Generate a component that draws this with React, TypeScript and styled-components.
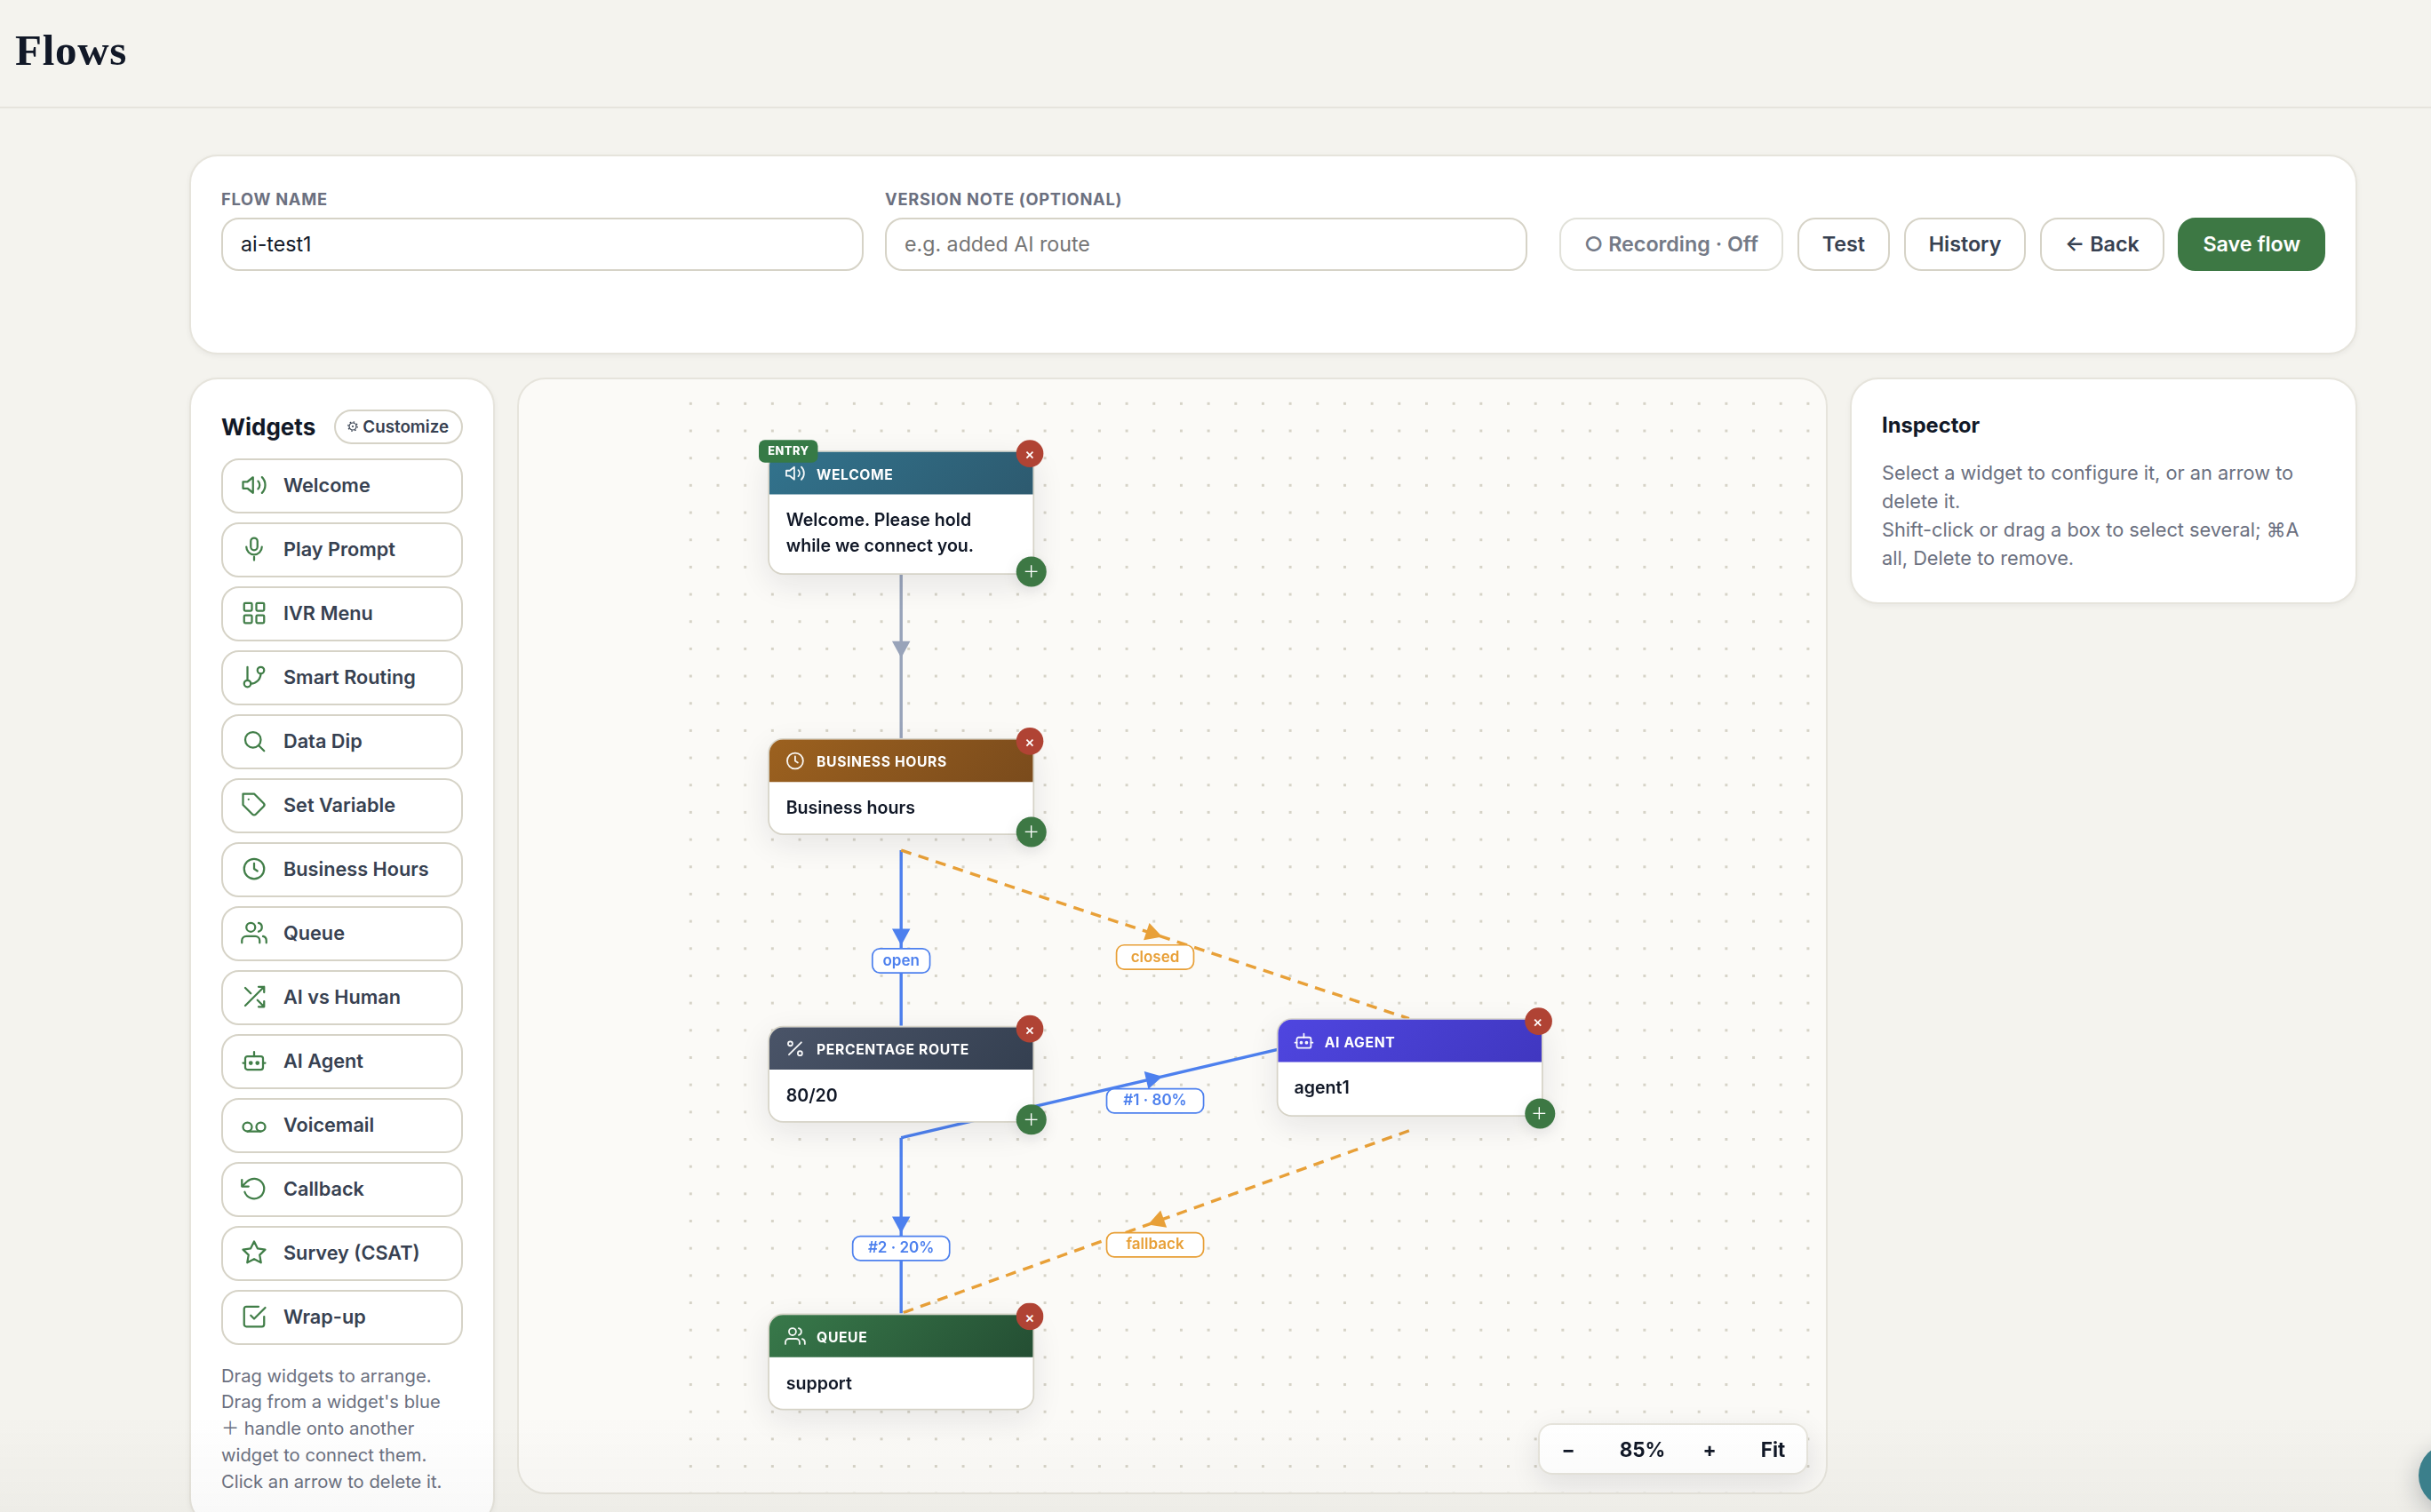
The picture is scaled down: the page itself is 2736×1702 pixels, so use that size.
import React from "react";
import styled, { createGlobalStyle } from "styled-components";

const FONT = `Inter, "Liberation Sans", "Noto Sans CJK SC", sans-serif`;

const Global = createGlobalStyle`
  *, *::before, *::after { box-sizing: border-box; }
  html, body { margin: 0; padding: 0; }
  body {
    background: #f4f3ee;
    font-family: ${FONT};
    color: #111827;
    overflow: hidden;
  }
  button, input { font-family: inherit; }
`;

const Page = styled.div`
  position: relative;
  width: 2736px;
  height: 1702px;
  overflow: hidden;
  background: #f4f3ee;
`;

const TopBar = styled.header`
  height: 122px;
  padding: 29px 17px 0;
  border-bottom: 2px solid #e6e4dd;
`;

const PageTitle = styled.h1`
  margin: 0;
  font-family: "Liberation Serif", serif;
  font-weight: 700;
  font-size: 49px;
  line-height: 56px;
  letter-spacing: 0.7px;
  color: #111827;
`;

const Main = styled.main`
  display: flex;
  flex-direction: column;
  gap: 26px;
  padding: 52px 83px 0 213px;
`;

const Card = styled.section`
  background: #fff;
  border: 2px solid #e6e4dc;
  border-radius: 32px;
  box-shadow: 0 2px 6px rgba(17, 24, 39, 0.05);
  padding: 33.5px 34px;
`;

const Toolbar = styled(Card)`
  height: 225px;
  display: flex;
  align-items: flex-start;
`;

const Fields = styled.div`
  flex: none;
  width: 1470px;
  display: grid;
  grid-template-columns: 1fr 1fr;
  gap: 24px;
  margin-right: 36px;
`;

const Field = styled.label`
  display: flex;
  flex-direction: column;
  gap: 7px;
`;

const FieldLabel = styled.span`
  font-size: 18.3px;
  font-weight: 700;
  line-height: 28px;
  letter-spacing: 0.73px;
  text-transform: uppercase;
  color: #6b7080;
`;

const TextInput = styled.input`
  width: 100%;
  height: 60px;
  padding: 0 20px;
  border: 2px solid #d6d3c7;
  border-radius: 20px;
  background: #fff;
  font-size: 23.2px;
  color: #111827;
  outline: none;
  &::placeholder { color: #757575; opacity: 1; }
`;

const Actions = styled.div`
  flex: 1;
  display: flex;
  justify-content: space-between;
  padding-top: 35px;
`;

const Button = styled.button<{ $kind?: "primary" | "muted" }>`
  height: 60px;
  padding: 0 26px;
  border-radius: 20px;
  font-size: 23.3px;
  font-weight: 600;
  white-space: nowrap;
  border: 2px solid
    ${(p) => (p.$kind === "primary" ? "#3d7844" : p.$kind === "muted" ? "#e1e1d9" : "#d6d3c7")};
  background: ${(p) => (p.$kind === "primary" ? "#3d7844" : "#fff")};
  color: ${(p) => (p.$kind === "primary" ? "#fff" : p.$kind === "muted" ? "#747a87" : "#374151")};
`;

const Workspace = styled.div`
  display: grid;
  grid-template-columns: 343.6px 1fr 571px;
  gap: 25px;
  align-items: start;
`;

const PanelHead = styled.div`
  display: flex;
  align-items: center;
  justify-content: space-between;
  height: 39px;
  margin-bottom: 16px;
`;

const PanelTitle = styled.h2`
  margin: 0;
  font-size: 26px;
  font-weight: 700;
  color: #111827;
`;

const CustomizeButton = styled.button`
  height: 39px;
  padding: 0 13.5px;
  border: 2px solid #d6d3c7;
  border-radius: 20px;
  background: #fff;
  font-size: 18.8px;
  font-weight: 600;
  color: #374151;
  display: flex;
  align-items: center;
  gap: 5px;
`;

const Gear = styled.svg`
  width: 12px;
  height: 12px;
  display: block;
`;

const WidgetList = styled.div`
  display: flex;
  flex-direction: column;
  gap: 10px;
`;

const WidgetButton = styled.button`
  height: 62px;
  display: flex;
  align-items: center;
  gap: 18px;
  padding: 0 20px 1px;
  border: 2px solid #d6d3c7;
  border-radius: 20px;
  background: #fff;
  font-size: 21.7px;
  font-weight: 600;
  color: #374151;
  text-align: left;
`;

const Glyph = styled.svg<{ $size: number; $color: string; $weight: number }>`
  flex: none;
  width: ${(p) => p.$size}px;
  height: ${(p) => p.$size}px;
  fill: none;
  stroke: ${(p) => p.$color};
  stroke-width: ${(p) => p.$weight};
  stroke-linecap: round;
  stroke-linejoin: round;
  overflow: visible;
`;

const Hint = styled.p`
  margin: 20px 0 0;
  font-size: 20.2px;
  line-height: 29.8px;
  color: #6b7080;
  white-space: pre-line;
`;

const Canvas = styled.section`
  position: relative;
  height: 1257px;
  border: 2px solid #e6e4dc;
  border-radius: 32px;
  background: #fbfaf7;
  overflow: hidden;
`;

const Stage = styled.div`
  position: absolute;
  left: 178.9px;
  top: 11.9px;
  width: 1200px;
  height: 900px;
  transform: scale(1.704);
  transform-origin: 0 0;
  background-image: radial-gradient(#d6d3c7 1px, transparent 1px);
  background-size: 18px 18px;
`;

const Edges = styled.svg`
  position: absolute;
  left: 0;
  top: 0;
  width: 1200px;
  height: 900px;
  overflow: visible;
`;

const EdgeText = styled.text`
  font-family: ${FONT};
  font-size: 10px;
  font-weight: 600;
  text-anchor: middle;
`;

const NodeBox = styled.div<{ $x: number; $y: number }>`
  position: absolute;
  left: ${(p) => p.$x}px;
  top: ${(p) => p.$y}px;
  width: 176px;
  border: 1px solid #d6d3c7;
  border-radius: 10px;
  background: #fff;
  box-shadow: 0 6px 20px rgba(17, 24, 39, 0.09);
`;

const NodeHead = styled.div<{ $from: string; $to: string }>`
  height: 28px;
  display: flex;
  align-items: center;
  gap: 7.2px;
  padding: 0 10px;
  border-radius: 9px 9px 0 0;
  background: linear-gradient(135deg, ${(p) => p.$from}, ${(p) => p.$to});
  color: #fff;
  font-size: 9.2px;
  font-weight: 700;
  letter-spacing: 0.37px;
  text-transform: uppercase;
`;

const NodeBody = styled.div`
  padding: 9px 11px 8px;
  font-size: 11.5px;
  line-height: 17.25px;
  font-weight: 600;
  color: #111827;
  white-space: pre-line;
`;

const EntryBadge = styled.span`
  position: absolute;
  left: -7px;
  top: -8px;
  height: 15px;
  padding: 0 6px;
  border-radius: 4px;
  background: #367a46;
  color: #fff;
  font-size: 7.5px;
  line-height: 15px;
  font-weight: 800;
  letter-spacing: 0.3px;
`;

const RemoveBadge = styled.span`
  position: absolute;
  right: -7px;
  top: -8px;
  width: 18px;
  height: 18px;
  border-radius: 50%;
  background: #b04334;
  color: #fff;
  font-size: 10px;
  line-height: 18.5px;
  font-weight: 500;
  text-align: center;
`;

const AddBadge = styled.span`
  position: absolute;
  right: -9px;
  bottom: -9px;
  width: 20px;
  height: 20px;
  border-radius: 50%;
  background: #3d7844;
  box-shadow: 0 3px 10px rgba(17, 24, 39, 0.1);
  display: flex;
  align-items: center;
  justify-content: center;
  color: #fff;
  font-size: 11px;
  line-height: 20px;
`;

const ZoomBar = styled.div`
  position: absolute;
  right: 20px;
  bottom: 20px;
  width: 304px;
  height: 58px;
  padding-left: 2px;
  display: grid;
  grid-template-columns: 60px 107px 44px 75px;
  justify-content: start;
  align-items: center;
  border: 2px solid #e6e4dc;
  border-radius: 16px;
  background: #fff;
  box-shadow: 0 10px 32px rgba(17, 24, 39, 0.1);
`;

const ZoomItem = styled.span<{ $push?: number }>`
  margin-left: ${(p) => p.$push ?? 0}px;
  margin-right: -${(p) => p.$push ?? 0}px;
  text-align: center;
  font-size: 22.4px;
  font-weight: 700;
  color: #111827;
`;

const InspectorTitle = styled.h2`
  margin: 0;
  font-size: 23.7px;
  line-height: 35px;
  font-weight: 700;
  color: #111827;
`;

const InspectorText = styled.p`
  margin: 20px 0 0;
  font-size: 21.76px;
  line-height: 32.3px;
  color: #6b7080;
`;

const BottomFade = styled.div`
  position: absolute;
  left: 0;
  right: 0;
  bottom: 0;
  height: 110px;
  background: linear-gradient(to bottom, rgba(60, 60, 50, 0), rgba(60, 60, 50, 0.03));
  pointer-events: none;
`;

const HelpBubble = styled.div`
  position: absolute;
  left: 2722px;
  top: 1625px;
  width: 72px;
  height: 72px;
  border-radius: 50%;
  background: #3b7f8b;
  box-shadow: 0 8px 28px rgba(17, 24, 39, 0.25);
`;

type IconName =
  | "volume" | "mic" | "grid" | "branch" | "search" | "tag" | "clock" | "users"
  | "shuffle" | "bot" | "voicemail" | "rotate" | "star" | "check" | "percent";

const ICONS: Record<IconName, React.ReactNode> = {
  volume: (
    <>
      <path d="M11 5 6 9H2v6h4l5 4z" />
      <path d="M15.54 8.46a5 5 0 0 1 0 7.07M19.07 4.93a10 10 0 0 1 0 14.14" />
    </>
  ),
  mic: (
    <>
      <rect x="9" y="2" width="6" height="11" rx="3" />
      <path d="M5 10a7 7 0 0 0 14 0M12 19v3" />
    </>
  ),
  grid: (
    <>
      <rect x="3" y="3" width="7" height="7" rx="1" />
      <rect x="14" y="3" width="7" height="7" rx="1" />
      <rect x="3" y="14" width="7" height="7" rx="1" />
      <rect x="14" y="14" width="7" height="7" rx="1" />
    </>
  ),
  branch: (
    <>
      <path d="M6 3v12M18 9a9 9 0 0 1-9 9" />
      <circle cx="18" cy="6" r="3" />
      <circle cx="6" cy="18" r="3" />
    </>
  ),
  search: (
    <>
      <circle cx="11" cy="11" r="7" />
      <path d="m21 21-5-5" />
    </>
  ),
  tag: (
    <>
      <path d="M20.59 13.41l-7.17 7.17a2 2 0 0 1-2.83 0L2 12V2h10l8.59 8.59a2 2 0 0 1 0 2.82z" />
      <path d="M7 7h.01" />
    </>
  ),
  clock: (
    <>
      <circle cx="12" cy="12" r="9" />
      <path d="M12 7v5l3 2" />
    </>
  ),
  users: (
    <>
      <path d="M17 21v-2a4 4 0 0 0-4-4H5a4 4 0 0 0-4 4v2" />
      <circle cx="9" cy="7" r="4" />
      <path d="M23 21v-2a4 4 0 0 0-3-3.87M16 3.13a4 4 0 0 1 0 7.75" />
    </>
  ),
  shuffle: <path d="M16 3h5v5M4 20 21 3M21 16v5h-5M15 15l6 6M4 4l5 5" />,
  bot: (
    <>
      <rect x="4" y="8" width="16" height="12" rx="2" />
      <path d="M12 8V4M2 14h2M20 14h2" />
      <circle cx="9" cy="14" r="1" />
      <circle cx="15" cy="14" r="1" />
    </>
  ),
  voicemail: (
    <>
      <circle cx="6" cy="14" r="4" />
      <circle cx="18" cy="14" r="4" />
      <path d="M6 18h12" />
    </>
  ),
  rotate: <path d="M1 4v6h6M3.51 15a9 9 0 1 0 2.13-9.36L1 10" />,
  star: (
    <path d="M12 2l3.09 6.26L22 9.27l-5 4.87 1.18 6.88L12 17.77l-6.18 3.25L7 14.14 2 9.27l6.91-1.01z" />
  ),
  check: (
    <>
      <path d="M9 11l3 3L22 4" />
      <path d="M21 12v7a2 2 0 0 1-2 2H5a2 2 0 0 1-2-2V5a2 2 0 0 1 2-2h11" />
    </>
  ),
  percent: (
    <>
      <path d="M19 5 5 19" />
      <circle cx="6.5" cy="6.5" r="2.5" />
      <circle cx="17.5" cy="17.5" r="2.5" />
    </>
  ),
};

const Icon = ({ name, size, color, weight = 1.8 }: { name: IconName; size: number; color: string; weight?: number }) => (
  <Glyph viewBox="0 0 24 24" $size={size} $color={color} $weight={weight}>
    {ICONS[name]}
  </Glyph>
);

const WIDGETS: [IconName, string][] = [
  ["volume", "Welcome"],
  ["mic", "Play Prompt"],
  ["grid", "IVR Menu"],
  ["branch", "Smart Routing"],
  ["search", "Data Dip"],
  ["tag", "Set Variable"],
  ["clock", "Business Hours"],
  ["users", "Queue"],
  ["shuffle", "AI vs Human"],
  ["bot", "AI Agent"],
  ["voicemail", "Voicemail"],
  ["rotate", "Callback"],
  ["star", "Survey (CSAT)"],
  ["check", "Wrap-up"],
];

interface FlowNode {
  x: number;
  y: number;
  icon: IconName;
  title: string;
  text: string;
  from: string;
  to: string;
  entry?: boolean;
  terminal?: boolean;
}

const NODES: FlowNode[] = [
  { x: 60, y: 40, icon: "volume", title: "Welcome", text: "Welcome. Please hold\nwhile we connect you.", from: "#32738d", to: "#2d5a6f", entry: true },
  { x: 60, y: 230, icon: "clock", title: "Business hours", text: "Business hours", from: "#9c611f", to: "#7a4b1c" },
  { x: 60, y: 420, icon: "percent", title: "Percentage route", text: "80/20", from: "#4a5468", to: "#343f50" },
  { x: 395.5, y: 415.3, icon: "bot", title: "AI Agent", text: "agent1", from: "#4f46e0", to: "#4037c0" },
  { x: 60, y: 610, icon: "users", title: "Queue", text: "support", from: "#38794a", to: "#244e33", terminal: true },
];

const GRAY = "#98a3b9";
const BLUE = "#4d80ee";
const AMBER = "#e8a038";

interface Edge {
  from: [number, number];
  to: [number, number];
  color: string;
  label?: string;
  dashed?: boolean;
}

const EDGES: Edge[] = [
  { from: [148, 114], to: [148, 230], color: GRAY },
  { from: [148, 304], to: [148, 420], color: BLUE, label: "open" },
  { from: [148, 494], to: [483.5, 415.3], color: BLUE, label: "#1 · 80%" },
  { from: [148, 304], to: [483.5, 415.3], color: AMBER, label: "closed", dashed: true },
  { from: [148, 494], to: [148, 610], color: BLUE, label: "#2 · 20%" },
  { from: [483.5, 489.3], to: [148, 610], color: AMBER, label: "fallback", dashed: true },
];

const EdgeLine = ({ edge }: { edge: Edge }) => {
  const [x1, y1] = edge.from;
  const [x2, y2] = edge.to;
  const mx = (x1 + x2) / 2;
  const my = (y1 + y2) / 2;
  const angle = (Math.atan2(y2 - y1, x2 - x1) * 180) / Math.PI;
  const w = edge.label ? edge.label.length * 6.5 + 12 : 0;
  return (
    <g>
      <line
        x1={x1}
        y1={y1}
        x2={x2}
        y2={y2}
        stroke={edge.color}
        strokeWidth={2}
        strokeDasharray={edge.dashed ? "7 5" : undefined}
      />
      <polygon points="-6,-6 5,0 -6,6" fill={edge.color} transform={`translate(${mx} ${my}) rotate(${angle})`} />
      {edge.label && (
        <>
          <rect x={mx - w / 2} y={my + 7} width={w} height={16} rx={5} fill="#fff" stroke={edge.color} strokeWidth={1} />
          <EdgeText x={mx} y={my + 18} fill={edge.color}>
            {edge.label}
          </EdgeText>
        </>
      )}
    </g>
  );
};

export default function App() {
  return (
    <>
      <Global />
      <Page>
        <TopBar>
          <PageTitle>Flows</PageTitle>
        </TopBar>
        <Main>
          <Toolbar>
            <Fields>
              <Field>
                <FieldLabel>Flow name</FieldLabel>
                <TextInput defaultValue="ai-test1" />
              </Field>
              <Field>
                <FieldLabel>Version note (optional)</FieldLabel>
                <TextInput placeholder="e.g. added AI route" />
              </Field>
            </Fields>
            <Actions>
              <Button $kind="muted">○ Recording · Off</Button>
              <Button>Test</Button>
              <Button>History</Button>
              <Button>← Back</Button>
              <Button $kind="primary">Save flow</Button>
            </Actions>
          </Toolbar>

          <Workspace>
            <Card>
              <PanelHead>
                <PanelTitle>Widgets</PanelTitle>
                <CustomizeButton>
                  <Gear viewBox="0 0 12 12" fill="none" stroke="#374151">
                    <circle cx="6" cy="6" r="4" strokeWidth="1.2" />
                    <circle cx="6" cy="6" r="1.1" fill="#374151" stroke="none" />
                    <circle cx="6" cy="6" r="5.2" strokeWidth="1.3" strokeDasharray="1.6 2.484" />
                  </Gear>
                  Customize
                </CustomizeButton>
              </PanelHead>
              <WidgetList>
                {WIDGETS.map(([icon, label]) => (
                  <WidgetButton key={label}>
                    <Icon name={icon} size={30} color="#417e48" />
                    {label}
                  </WidgetButton>
                ))}
              </WidgetList>
              <Hint>
                {"Drag widgets to arrange.\nDrag from a widget's blue\n＋ handle onto another\nwidget to connect them.\nClick an arrow to delete it."}
              </Hint>
            </Card>

            <Canvas>
              <Stage>
                <Edges>
                  {EDGES.map((edge, i) => (
                    <EdgeLine key={i} edge={edge} />
                  ))}
                </Edges>
                {NODES.map((n) => (
                  <NodeBox key={n.title} $x={n.x} $y={n.y}>
                    <NodeHead $from={n.from} $to={n.to}>
                      <Icon name={n.icon} size={14} color="rgba(255,255,255,0.95)" />
                      {n.title}
                    </NodeHead>
                    <NodeBody>{n.text}</NodeBody>
                    {n.entry && <EntryBadge>ENTRY</EntryBadge>}
                    <RemoveBadge>×</RemoveBadge>
                    {!n.terminal && <AddBadge>＋</AddBadge>}
                  </NodeBox>
                ))}
              </Stage>
              <ZoomBar>
                <ZoomItem>−</ZoomItem>
                <ZoomItem>85%</ZoomItem>
                <ZoomItem>+</ZoomItem>
                <ZoomItem $push={12}>Fit</ZoomItem>
              </ZoomBar>
            </Canvas>

            <Card>
              <InspectorTitle>Inspector</InspectorTitle>
              <InspectorText>
                Select a widget to configure it, or an arrow to delete it.
                <br />
                Shift-click or drag a box to select several; ⌘A all, Delete to remove.
              </InspectorText>
            </Card>
          </Workspace>
        </Main>
        <BottomFade />
        <HelpBubble />
      </Page>
    </>
  );
}
